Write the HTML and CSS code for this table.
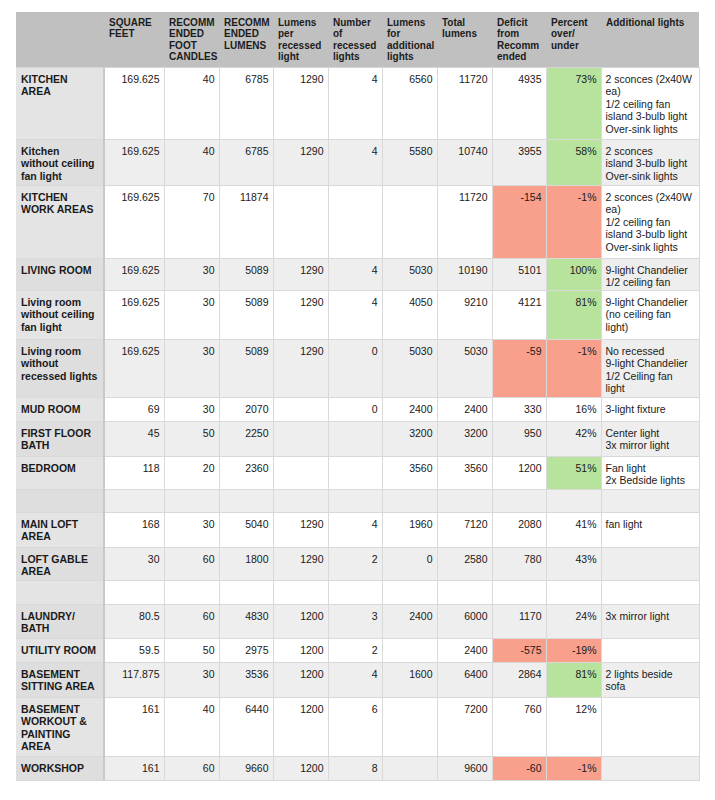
FILE: index.html
```html
<!DOCTYPE html>
<html>
<head>
<meta charset="utf-8">
<link rel="stylesheet" href="styles.css">
</head>
<body>
<table class="sheet">
  <colgroup>
    <col class="w88"><col class="w60"><col class="w55"><col class="w54"><col class="w55"><col class="w54"><col class="w55"><col class="w55"><col class="w54"><col class="w55"><col class="w98">
  </colgroup>
  <thead>
    <tr class="hd">
      <th class="name"></th>
      <th>SQUARE<br>FEET</th>
      <th>RECOMM<br>ENDED<br>FOOT<br>CANDLES</th>
      <th>RECOMM<br>ENDED<br>LUMENS</th>
      <th>Lumens<br>per<br>recessed<br>light</th>
      <th>Number<br>of<br>recessed<br>lights</th>
      <th>Lumens<br>for<br>additional<br>lights</th>
      <th>Total<br>lumens</th>
      <th>Deficit<br>from<br>Recomm<br>ended</th>
      <th>Percent<br>over/<br>under</th>
      <th>Additional lights</th>
    </tr>
  </thead>
  <tbody>
    <tr class="h72"><td class="name">KITCHEN<br>AREA</td><td>169.625</td><td>40</td><td>6785</td><td>1290</td><td>4</td><td>6560</td><td>11720</td><td>4935</td><td class="good">73%</td><td class="txt">2 sconces (2x40W<br>ea)<br>1/2 ceiling fan<br>island 3-bulb light<br>Over-sink lights</td></tr>
    <tr class="h46"><td class="name">Kitchen<br>without ceiling<br>fan light</td><td>169.625</td><td>40</td><td>6785</td><td>1290</td><td>4</td><td>5580</td><td>10740</td><td>3955</td><td class="good">58%</td><td class="txt">2 sconces<br>island 3-bulb light<br>Over-sink lights</td></tr>
    <tr class="h73"><td class="name">KITCHEN<br>WORK AREAS</td><td>169.625</td><td>70</td><td>11874</td><td></td><td></td><td></td><td>11720</td><td class="bad">-154</td><td class="bad">-1%</td><td class="txt">2 sconces (2x40W<br>ea)<br>1/2 ceiling fan<br>island 3-bulb light<br>Over-sink lights</td></tr>
    <tr class="h32"><td class="name">LIVING ROOM</td><td>169.625</td><td>30</td><td>5089</td><td>1290</td><td>4</td><td>5030</td><td>10190</td><td>5101</td><td class="good">100%</td><td class="txt">9-light Chandelier<br>1/2 ceiling fan</td></tr>
    <tr class="h49"><td class="name">Living room<br>without ceiling<br>fan light</td><td>169.625</td><td>30</td><td>5089</td><td>1290</td><td>4</td><td>4050</td><td>9210</td><td>4121</td><td class="good">81%</td><td class="txt">9-light Chandelier<br>(no ceiling fan<br>light)</td></tr>
    <tr class="h58"><td class="name">Living room<br>without<br>recessed lights</td><td>169.625</td><td>30</td><td>5089</td><td>1290</td><td>0</td><td>5030</td><td>5030</td><td class="bad">-59</td><td class="bad">-1%</td><td class="txt">No recessed<br>9-light Chandelier<br>1/2 Ceiling fan<br>light</td></tr>
    <tr class="h24"><td class="name">MUD ROOM</td><td>69</td><td>30</td><td>2070</td><td></td><td>0</td><td>2400</td><td>2400</td><td>330</td><td>16%</td><td class="txt">3-light fixture</td></tr>
    <tr class="h35"><td class="name">FIRST FLOOR<br>BATH</td><td>45</td><td>50</td><td>2250</td><td></td><td></td><td>3200</td><td>3200</td><td>950</td><td>42%</td><td class="txt">Center light<br>3x mirror light</td></tr>
    <tr class="h33"><td class="name">BEDROOM</td><td>118</td><td>20</td><td>2360</td><td></td><td></td><td>3560</td><td>3560</td><td>1200</td><td class="good">51%</td><td class="txt">Fan light<br>2x Bedside lights</td></tr>
    <tr class="h23"><td class="name"></td><td></td><td></td><td></td><td></td><td></td><td></td><td></td><td></td><td></td><td class="txt"></td></tr>
    <tr class="h35"><td class="name">MAIN LOFT<br>AREA</td><td>168</td><td>30</td><td>5040</td><td>1290</td><td>4</td><td>1960</td><td>7120</td><td>2080</td><td>41%</td><td class="txt">fan light</td></tr>
    <tr class="h33"><td class="name">LOFT GABLE<br>AREA</td><td>30</td><td>60</td><td>1800</td><td>1290</td><td>2</td><td>0</td><td>2580</td><td>780</td><td>43%</td><td class="txt"></td></tr>
    <tr class="h24"><td class="name"></td><td></td><td></td><td></td><td></td><td></td><td></td><td></td><td></td><td></td><td class="txt"></td></tr>
    <tr class="h34"><td class="name">LAUNDRY/<br>BATH</td><td>80.5</td><td>60</td><td>4830</td><td>1200</td><td>3</td><td>2400</td><td>6000</td><td>1170</td><td>24%</td><td class="txt">3x mirror light</td></tr>
    <tr class="h24"><td class="name">UTILITY ROOM</td><td>59.5</td><td>50</td><td>2975</td><td>1200</td><td>2</td><td></td><td>2400</td><td class="bad">-575</td><td class="bad">-19%</td><td class="txt"></td></tr>
    <tr class="h35"><td class="name">BASEMENT<br>SITTING AREA</td><td>117.875</td><td>30</td><td>3536</td><td>1200</td><td>4</td><td>1600</td><td>6400</td><td>2864</td><td class="good">81%</td><td class="txt">2 lights beside<br>sofa</td></tr>
    <tr class="h59"><td class="name">BASEMENT<br>WORKOUT &amp;<br>PAINTING<br>AREA</td><td>161</td><td>40</td><td>6440</td><td>1200</td><td>6</td><td></td><td>7200</td><td>760</td><td>12%</td><td class="txt"></td></tr>
    <tr class="h24"><td class="name">WORKSHOP</td><td>161</td><td>60</td><td>9660</td><td>1200</td><td>8</td><td></td><td>9600</td><td class="bad">-60</td><td class="bad">-1%</td><td class="txt"></td></tr>
  </tbody>
</table>
</body>
</html>
```
FILE: styles.css
```css
html, body {
  margin: 0;
  padding: 0;
  background: #ffffff;
}
body {
  padding: 12px 0 0 16px;
  font-family: "Liberation Sans", Arial, Helvetica, sans-serif;
  color: #1a1a1a;
}
.sheet {
  border-collapse: collapse;
  table-layout: fixed;
  width: 683px;
  font-size: 10.5px;
  line-height: 12.6px;
}
.w88 { width: 88px; }
.w60 { width: 60px; }
.w55 { width: 55px; }
.w54 { width: 54px; }
.w98 { width: 98px; }

.hd {
  height: 55px;
  background: #c0c0c0;
}
.hd th {
  font-size: 10px;
  line-height: 11.4px;
  font-weight: bold;
  text-align: left;
  vertical-align: top;
  padding: 5px 3px 0 5px;
  color: #1c1c1c;
  border-bottom: 1px solid #d4d4d4;
}
.sheet td {
  vertical-align: top;
  text-align: right;
  padding: 5px 4px 0 4px;
  border: 1px solid #d9d9d9;
  white-space: nowrap;
  overflow: hidden;
}
.sheet tbody tr:nth-child(even) td {
  background: #eeeeee;
}
.sheet td.name {
  text-align: left;
  font-weight: bold;
  padding-left: 5px;
  background: #e4e4e4;
  border-right: 2px solid #c9c9c9;
  border-left: none;
}
.sheet tbody tr:nth-child(even) td.name {
  background: #dedede;
}
.sheet td.txt {
  text-align: left;
  padding-left: 4px;
  border-right: 1px solid #d9d9d9;
}
.sheet td.good,
.sheet tbody tr:nth-child(even) td.good {
  background: #b7e39d;
}
.sheet td.bad,
.sheet tbody tr:nth-child(even) td.bad {
  background: #f8a08c;
}

.h23 { height: 23px; }
.h24 { height: 24px; }
.h32 { height: 32px; }
.h33 { height: 33px; }
.h34 { height: 34px; }
.h35 { height: 35px; }
.h46 { height: 46px; }
.h49 { height: 49px; }
.h58 { height: 58px; }
.h59 { height: 59px; }
.h72 { height: 72px; }
.h73 { height: 73px; }
```
